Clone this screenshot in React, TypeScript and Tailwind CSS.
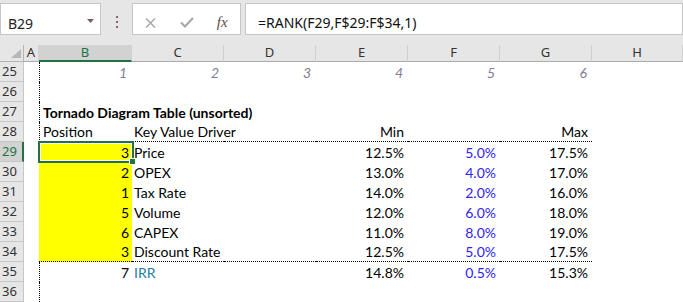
import React from 'react';

const drivers = [
  { pos: 3, name: 'Price', min: '12.5%', delta: '5.0%', max: '17.5%' },
  { pos: 2, name: 'OPEX', min: '13.0%', delta: '4.0%', max: '17.0%' },
  { pos: 1, name: 'Tax Rate', min: '14.0%', delta: '2.0%', max: '16.0%' },
  { pos: 5, name: 'Volume', min: '12.0%', delta: '6.0%', max: '18.0%' },
  { pos: 6, name: 'CAPEX', min: '11.0%', delta: '8.0%', max: '19.0%' },
  { pos: 3, name: 'Discount Rate', min: '12.5%', delta: '5.0%', max: '17.5%' },
];

const columns = ['A', 'B', 'C', 'D', 'E', 'F', 'G', 'H'];

const grid = 'grid grid-cols-[24px_15px_93px_92px_92px_92px_92px_92px_1fr]';
const cell = 'h-[20px] flex items-center whitespace-nowrap';

function RowHeader({ n, active }: { n: number; active?: boolean }) {
  return (
    <div
      className={`h-[20px] flex items-center pl-[2px] text-[13px] border-b border-[#c6c6c6] ${
        active
          ? 'bg-[#d2d2d2] text-[#217346] border-r-2 border-r-[#217346]'
          : 'bg-[#e6e6e6] text-[#333] border-r border-r-[#c6c6c6]'
      }`}
      style={{ fontFamily: '"Noto Sans", sans-serif' }}
    >
      {n}
    </div>
  );
}

export default function App() {
  return (
    <div
      className="w-[683px] h-[302px] overflow-hidden bg-white text-black"
      style={{ fontFamily: 'Lato, "Liberation Sans", sans-serif' }}
    >
      {/* formula bar */}
      <div className="h-[45px] bg-[#e6e6e6] flex pt-[3px]">
        <div
          className="w-[101px] h-[32px] bg-white border border-[#c6c6c6] flex items-center pl-[7px] pt-[8px] text-[14px] text-[#222]"
          style={{ fontFamily: '"Noto Sans", sans-serif' }}
        >
          <span className="flex-1">B29</span>
          <svg width="7" height="4" viewBox="0 0 7 4" className="mr-[6px] mb-[4px]">
            <path d="M0 0 L7 0 L3.5 4 Z" fill="#7a5c5c" />
          </svg>
        </div>
        <div className="w-[31px] flex flex-col items-center pt-[13px] gap-[3px]">
          <div className="w-[2px] h-[2px] bg-[#8a6464]" />
          <div className="w-[2px] h-[2px] bg-[#8a6464]" />
          <div className="w-[2px] h-[2px] bg-[#8a6464]" />
        </div>
        <div className="w-[109px] h-[32px] bg-white border border-[#c6c6c6] flex items-center pt-[7px]">
          <div className="w-[36px] flex justify-center">
            <svg width="11" height="10" viewBox="0 0 11 10">
              <path d="M1 0.5 L10 9.5 M10 0.5 L1 9.5" stroke="#a6a6a6" strokeWidth="1.4" />
            </svg>
          </div>
          <div className="w-[36px] flex justify-center">
            <svg width="14" height="11" viewBox="0 0 14 11">
              <path d="M1 5.5 L5 9.5 L13 1" stroke="#a6a6a6" strokeWidth="2" fill="none" />
            </svg>
          </div>
          <div
            className="w-[36px] flex justify-center italic text-[15px] text-[#5e4c4c] leading-none"
            style={{ fontFamily: '"Liberation Serif", serif' }}
          >
            fx
          </div>
        </div>
        <div
          className="flex-1 ml-[4px] h-[32px] bg-white border border-[#c6c6c6] flex items-center pl-[12px] pt-[7px] text-[14px] text-[#111]"
          style={{ fontFamily: '"Noto Sans", sans-serif' }}
        >
          =RANK(F29,F$29:F$34,1)
        </div>
      </div>

      {/* column headers */}
      <div className={grid} style={{ fontFamily: '"Noto Sans", sans-serif' }}>
        <div className="h-[17px] bg-[#e6e6e6] border-b border-r border-[#b4b4b4] flex items-end justify-end pr-[2px] pb-[3px]">
          <svg width="10" height="9" viewBox="0 0 10 9">
            <path d="M10 0 L10 9 L0 9 Z" fill="#b7b7b7" />
          </svg>
        </div>
        {columns.map((c) => (
          <div
            key={c}
            className={`h-[17px] flex items-center justify-center text-[13px] border-r border-r-[#d0d0d0] ${
              c === 'B'
                ? 'bg-[#d2d2d2] text-[#217346] border-b-2 border-b-[#217346]'
                : 'bg-[#e6e6e6] text-[#333] border-b border-b-[#ababab]'
            }`}
          >
            {c}
          </div>
        ))}
      </div>

      {/* sheet */}
      <div className={`${grid} text-[14px]`}>
        {/* row 25 */}
        <RowHeader n={25} />
        <div className={cell} />
        {[1, 2, 3, 4, 5, 6].map((n, i) => (
          <div
            key={n}
            className={`${cell} justify-end pr-[5px] italic text-[#7d7d93] ${i === 0 ? 'border-l border-dotted border-black' : ''}`}
          >
            {n}
          </div>
        ))}
        <div className={cell} />

        {/* row 26 */}
        <RowHeader n={26} />
        <div className={cell} />
        <div className={`${cell} border-l border-dotted border-black`} />
        <div className={cell} />
        <div className={cell} />
        <div className={cell} />
        <div className={cell} />
        <div className={cell} />
        <div className={cell} />

        {/* row 27 */}
        <RowHeader n={27} />
        <div className={cell} />
        <div className={`${cell} border-l border-dotted border-black pl-[3px] font-bold overflow-visible`}>
          Tornado Diagram Table (unsorted)
        </div>
        <div className={cell} />
        <div className={cell} />
        <div className={cell} />
        <div className={cell} />
        <div className={cell} />
        <div className={cell} />

        {/* row 28 */}
        <RowHeader n={28} />
        <div className={cell} />
        <div className={`${cell} border-l border-b border-dotted border-black pl-[3px]`}>Position</div>
        <div className={`${cell} border-b border-dotted border-black pl-[2px]`}>Key Value Driver</div>
        <div className={`${cell} border-b border-dotted border-black`} />
        <div className={`${cell} border-b border-dotted border-black justify-end pr-[4px]`}>Min</div>
        <div className={`${cell} border-b border-dotted border-black`} />
        <div className={`${cell} border-b border-dotted border-black justify-end pr-[4px]`}>Max</div>
        <div className={cell} />

        {/* rows 29-34 */}
        {drivers.map((d, i) => {
          const last = i === drivers.length - 1;
          const bottom = last ? 'border-b border-dotted border-black' : '';
          return (
            <React.Fragment key={i}>
              <RowHeader n={29 + i} active={i === 0} />
              <div className={cell} />
              <div className={`${cell} relative bg-[#ffff00] justify-end pr-[3px] ${bottom}`}>
                {d.pos}
                {i === 0 && (
                  <>
                    <div className="absolute left-[-1px] top-[-1px] w-[96px] h-[22px] border-2 border-[#217346] shadow-[inset_0_0_0_1px_white] z-10" />
                    <div className="absolute left-[90px] top-[16px] w-[7px] h-[7px] bg-[#217346] border border-white z-20" />
                  </>
                )}
              </div>
              <div className={`${cell} pl-[2px] ${bottom}`}>{d.name}</div>
              <div className={`${cell} ${bottom}`} />
              <div className={`${cell} justify-end pr-[4px] ${bottom}`}>{d.min}</div>
              <div className={`${cell} justify-end pr-[4px] text-[#3021ff] ${bottom}`}>{d.delta}</div>
              <div className={`${cell} justify-end pr-[4px] ${bottom}`}>{d.max}</div>
              <div className={cell} />
            </React.Fragment>
          );
        })}

        {/* row 35 */}
        <RowHeader n={35} />
        <div className={cell} />
        <div className={`${cell} border-l border-dotted border-black justify-end pr-[3px]`}>7</div>
        <div className={`${cell} pl-[2px] text-[#1f7b9a]`}>IRR</div>
        <div className={cell} />
        <div className={`${cell} justify-end pr-[4px]`}>14.8%</div>
        <div className={`${cell} justify-end pr-[4px] text-[#3021ff]`}>0.5%</div>
        <div className={`${cell} justify-end pr-[4px]`}>15.3%</div>
        <div className={cell} />

        {/* row 36 */}
        <RowHeader n={36} />
        <div className={cell} />
        <div className={`${cell} border-l border-dotted border-black`} />
        <div className={cell} />
        <div className={cell} />
        <div className={cell} />
        <div className={cell} />
        <div className={cell} />
        <div className={cell} />
      </div>
    </div>
  );
}
